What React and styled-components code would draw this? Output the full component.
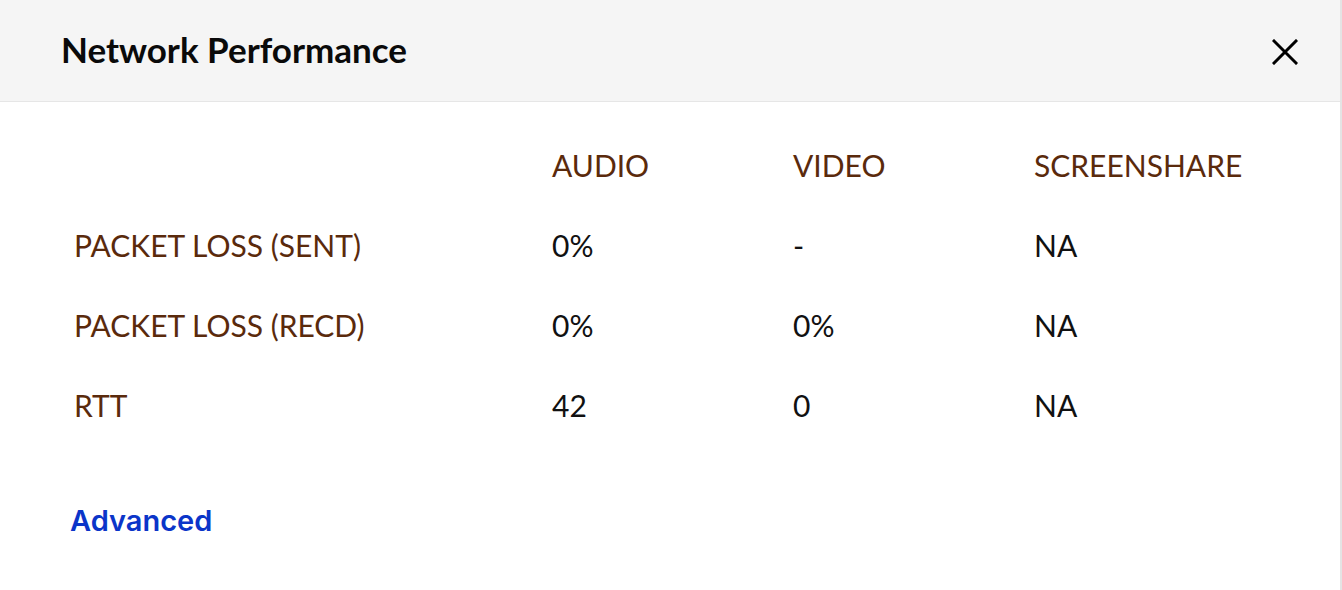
import React from 'react';
import styled, { createGlobalStyle } from 'styled-components';

const Global = createGlobalStyle`
  html, body { margin: 0; padding: 0; background: #fff; }
  body { font-family: Lato, "Open Sans", sans-serif; }
`;

const Panel = styled.div`
  width: 1340px;
  height: 590px;
  border-right: 2px solid #e4e4e4;
  background: #fff;
`;

const Header = styled.header`
  height: 101px;
  background: #f5f5f5;
  border-bottom: 1px solid #e6e6e6;
  display: flex;
  align-items: center;
  justify-content: space-between;
  padding: 0 41px 0 61px;
`;

const Title = styled.h1`
  margin: 0 0 3px;
  font-family: Lato, sans-serif;
  font-weight: 700;
  font-size: 35px;
  color: #0a0a0a;
`;

const CloseBtn = styled.button`
  border: 0;
  background: none;
  padding: 0;
  width: 28px;
  height: 28px;
  margin-top: 3px;
  display: flex;
  align-items: center;
  justify-content: center;
  cursor: pointer;
`;

const Body = styled.div`
  padding: 23px 0 0 74px;
`;

const Table = styled.div`
  display: grid;
  grid-template-columns: 478px 241px 241px auto;
  grid-auto-rows: 80px;
  align-items: center;
`;

const Cell = styled.div`
  font-size: 30px;
  color: ${(p) => (p.$head ? '#5a2a0c' : '#111')};
  white-space: nowrap;
`;

const Advanced = styled.a`
  display: inline-block;
  margin: 58px 0 0 70px;
  font-family: Inter, sans-serif;
  font-weight: 600;
  font-size: 29px;
  color: #0b35c9;
  text-decoration: none;
  cursor: pointer;
`;

const rows = [
  ['PACKET LOSS (SENT)', '0%', '-', 'NA'],
  ['PACKET LOSS (RECD)', '0%', '0%', 'NA'],
  ['RTT', '42', '0', 'NA'],
];

export default function App() {
  return (
    <Panel>
      <Global />
      <Header>
        <Title>Network Performance</Title>
        <CloseBtn aria-label="Close">
          <svg width="26" height="26" viewBox="0 0 26 26">
            <path d="M2 2 L24 24 M24 2 L2 24" stroke="#000" strokeWidth="3" strokeLinecap="square" />
          </svg>
        </CloseBtn>
      </Header>
      <Body>
        <Table>
          <Cell />
          <Cell $head>AUDIO</Cell>
          <Cell $head>VIDEO</Cell>
          <Cell $head>SCREENSHARE</Cell>
          {rows.map((r) => (
            <React.Fragment key={r[0]}>
              <Cell $head>{r[0]}</Cell>
              <Cell>{r[1]}</Cell>
              <Cell>{r[2]}</Cell>
              <Cell>{r[3]}</Cell>
            </React.Fragment>
          ))}
        </Table>
      </Body>
      <Advanced>Advanced</Advanced>
    </Panel>
  );
}
